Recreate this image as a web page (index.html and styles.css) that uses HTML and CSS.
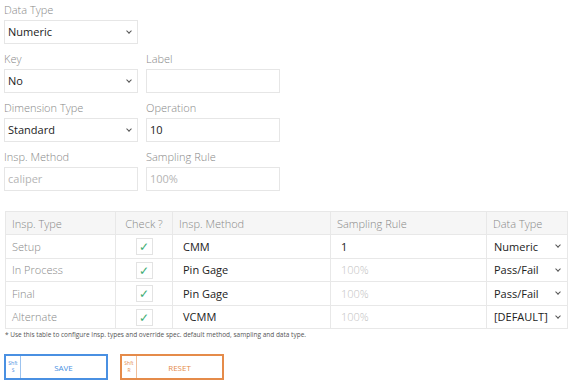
FILE: index.html
```html
<!DOCTYPE html>
<html lang="en">
<head>
    <meta charset="UTF-8">
    <meta name="viewport" content="width=device-width, initial-scale=1.0">
    <title>Inspection Settings</title>
    <link rel="stylesheet" href="styles.css">
</head>
<body>
    <div class="page">
        <div class="form">
            <div class="row">
                <div class="field">
                    <label>Data Type</label>
                    <div class="select"><span>Numeric</span><i class="chev"></i></div>
                </div>
            </div>
            <div class="row">
                <div class="field">
                    <label>Key</label>
                    <div class="select"><span>No</span><i class="chev"></i></div>
                </div>
                <div class="field">
                    <label>Label</label>
                    <div class="input"></div>
                </div>
            </div>
            <div class="row">
                <div class="field">
                    <label>Dimension Type</label>
                    <div class="select"><span>Standard</span><i class="chev"></i></div>
                </div>
                <div class="field">
                    <label>Operation</label>
                    <div class="input">10</div>
                </div>
            </div>
            <div class="row">
                <div class="field">
                    <label>Insp. Method</label>
                    <div class="input placeholder">caliper</div>
                </div>
                <div class="field">
                    <label>Sampling Rule</label>
                    <div class="input placeholder">100%</div>
                </div>
            </div>
        </div>

        <table class="insp-table">
            <thead>
                <tr>
                    <th class="c-type">Insp. Type</th>
                    <th class="c-check">Check ?</th>
                    <th class="c-method">Insp. Method</th>
                    <th class="c-rule">Sampling Rule</th>
                    <th class="c-data">Data Type</th>
                </tr>
            </thead>
            <tbody>
                <tr>
                    <td class="c-type">Setup</td>
                    <td class="c-check"><span class="box">&#10003;</span></td>
                    <td class="c-method">CMM</td>
                    <td class="c-rule">1</td>
                    <td class="c-data"><div class="cell-select"><span>Numeric</span><i class="chev"></i></div></td>
                </tr>
                <tr>
                    <td class="c-type">In Process</td>
                    <td class="c-check"><span class="box">&#10003;</span></td>
                    <td class="c-method">Pin Gage</td>
                    <td class="c-rule placeholder">100%</td>
                    <td class="c-data"><div class="cell-select"><span>Pass/Fail</span><i class="chev"></i></div></td>
                </tr>
                <tr>
                    <td class="c-type">Final</td>
                    <td class="c-check"><span class="box">&#10003;</span></td>
                    <td class="c-method">Pin Gage</td>
                    <td class="c-rule placeholder">100%</td>
                    <td class="c-data"><div class="cell-select"><span>Pass/Fail</span><i class="chev"></i></div></td>
                </tr>
                <tr>
                    <td class="c-type">Alternate</td>
                    <td class="c-check"><span class="box">&#10003;</span></td>
                    <td class="c-method">VCMM</td>
                    <td class="c-rule placeholder">100%</td>
                    <td class="c-data"><div class="cell-select"><span>[DEFAULT]</span><i class="chev"></i></div></td>
                </tr>
            </tbody>
        </table>
        <p class="note">* Use this table to configure Insp. types and override spec. default method, sampling and data type.</p>

        <div class="actions">
            <button class="btn save"><span class="key">Shft<br>S</span><span class="label">SAVE</span></button>
            <button class="btn reset"><span class="key">Shft<br>R</span><span class="label">RESET</span></button>
        </div>
    </div>
</body>
</html>
```

FILE: styles.css
```css
* {
    margin: 0;
    padding: 0;
    box-sizing: border-box;
}

body {
    font-family: "Open Sans", Arial, sans-serif;
    font-size: 11px;
    color: #222;
    background: #fff;
}

.page {
    padding: 2px 5px 0 4px;
}

/* Top form */
.row {
    display: flex;
    gap: 8px;
    margin-bottom: 7px;
}

.field {
    width: 134px;
}

.field label {
    display: block;
    color: #888;
    font-weight: 300;
    line-height: 16px;
    height: 18px;
}

.select,
.input {
    height: 24px;
    border: 1px solid #e6e6e6;
    display: flex;
    align-items: center;
    padding: 0 6px 0 3px;
    line-height: 22px;
}

.select span {
    flex: 1;
}

.placeholder {
    color: #b5b5b5;
}

.chev {
    width: 4px;
    height: 4px;
    border-right: 1px solid #555;
    border-bottom: 1px solid #555;
    transform: rotate(45deg);
    margin-top: -2px;
}

/* Table */
.insp-table {
    width: 562px;
    margin-top: 20px;
    margin-left: 1px;
    border-collapse: collapse;
    table-layout: fixed;
}

.insp-table th,
.insp-table td {
    border: 1px solid #e8e8e8;
    text-align: left;
    padding: 0 6px;
    white-space: nowrap;
}

.insp-table th {
    background: #f6f6f6;
    font-weight: 300;
    color: #888;
    height: 23px;
}

.insp-table td {
    height: 23.5px;
}

.insp-table td.c-type {
    color: #888;
    font-weight: 300;
}

.c-type { width: 110px; }
.c-check { width: 57px; }
.c-method { width: 158px; }
.c-rule { width: 156px; }
.c-data { width: 81px; }

.insp-table th.c-check,
.insp-table td.c-check {
    text-align: center;
    padding: 0;
}

.insp-table td.c-method,
.insp-table td.c-rule {
    padding-left: 10px;
}

.insp-table td.placeholder {
    color: #c2c2c2;
    font-weight: 300;
}

.box {
    display: inline-block;
    width: 17px;
    height: 17px;
    border: 1px solid #e3e3e3;
    color: #3fae74;
    font-size: 12px;
    line-height: 15px;
    text-align: center;
    vertical-align: middle;
}

.cell-select {
    display: flex;
    align-items: center;
    padding-left: 1px;
    padding-right: 1px;
}

.cell-select span {
    flex: 1;
}

.note {
    font-size: 6.5px;
    color: #555;
    margin-top: 1px;
    margin-left: 1px;
}

/* Buttons */
.actions {
    display: flex;
    gap: 12px;
    margin-top: 15px;
}

.btn {
    display: flex;
    width: 104px;
    height: 26px;
    background: #fff;
    border: 2px solid;
    font-family: inherit;
    cursor: pointer;
}

.btn .key {
    width: 15px;
    height: 100%;
    font-size: 5px;
    line-height: 7px;
    display: flex;
    align-items: center;
    justify-content: center;
    text-align: center;
    border-right: 1px solid;
}

.btn .label {
    flex: 1;
    align-self: center;
    font-size: 8px;
    text-align: center;
}

.save {
    border-color: #4a90e2;
    color: #4a90e2;
}

.save .key {
    border-color: #9cc3ef;
}

.reset {
    border-color: #e58b4a;
    color: #e58b4a;
}

.reset .key {
    border-color: #f0bf9b;
}
```
